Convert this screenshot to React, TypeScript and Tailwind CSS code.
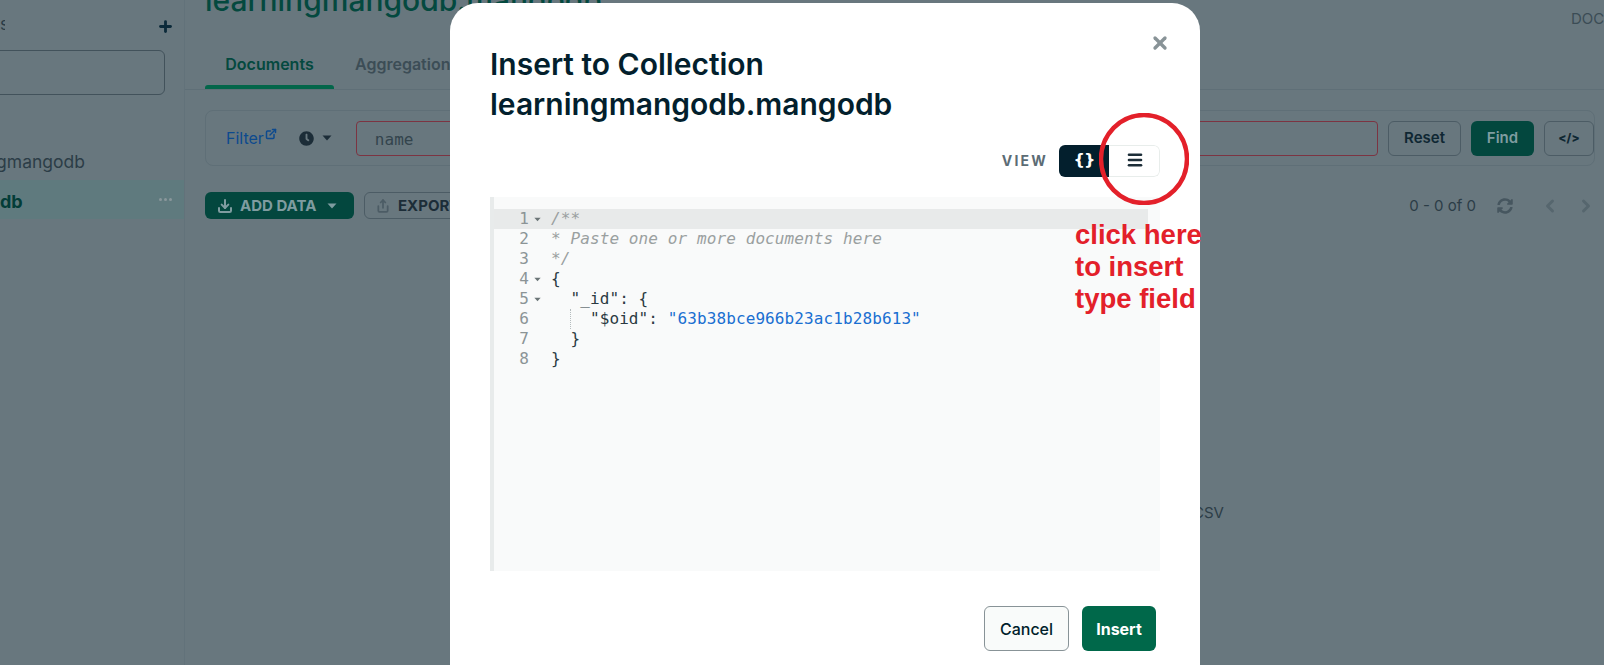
import React from "react";
import { Plus, ExternalLink, Download, Share, ChevronLeft, ChevronRight, X, Menu } from "lucide-react";
import { FaClock, FaSyncAlt } from "react-icons/fa";

function Caret({ className }: { className?: string }) {
  return (
    <svg viewBox="0 0 10 6" className={className} width="10" height="6">
      <path d="M0.5 0.5 L9.5 0.5 L5 5.5 Z" fill="currentColor" />
    </svg>
  );
}

const lines: { n: number; fold?: boolean; node: React.ReactNode; active?: boolean; guide?: boolean }[] = [
  { n: 1, fold: true, active: true, node: <span className="italic text-[#9aa0a0]">/**</span> },
  { n: 2, node: <span className="italic text-[#9aa0a0]">{"* Paste one or more documents here"}</span> },
  { n: 3, node: <span className="italic text-[#9aa0a0]">{"*/"}</span> },
  { n: 4, fold: true, node: <span>{"{"}</span> },
  { n: 5, fold: true, node: <span>{'  "_id": {'}</span> },
  {
    n: 6,
    guide: true,
    node: (
      <span>
        {'    "$oid": '}
        <span className="text-[#1a6fd1]">"63b38bce966b23ac1b28b613"</span>
      </span>
    ),
  },
  { n: 7, node: <span>{"  }"}</span> },
  { n: 8, node: <span>{"}"}</span> },
];

export default function App() {
  return (
    <div className="relative flex h-[665px] w-[1604px] overflow-hidden bg-[#68777e] font-['Inter',sans-serif] text-[#1c2d38]">
      {/* dimmed sidebar */}
      <aside className="flex w-[185px] shrink-0 flex-col border-r border-[#62727a] pt-[14px]">
        <div className="flex h-[22px] items-center justify-between pr-[10px] text-[17px] text-[#2a3b45]">
          <span className="w-[5px] overflow-hidden">s</span>
          <Plus size={17} strokeWidth={4} className="mt-[2px] text-[#0b2a3a]" />
        </div>
        <div className="-ml-[10px] mt-[14px] mr-[19px] h-[45px] rounded-[6px] border border-[#42525b]" />
        <div className="mt-[54px] flex h-[26px] items-center justify-end overflow-hidden pr-[99px] text-[17.5px] whitespace-nowrap text-[#2c3d47]">
          learningmangodb
        </div>
        <div className="mt-[5px] flex h-[39px] items-center bg-[#5f7a7e]">
          <span className="pt-[3px] text-[18px] font-bold text-[#033d38]">db</span>
          <div className="ml-auto mr-[12px] flex gap-[2px]">
            <span className="h-[3px] w-[3px] rounded-full bg-[#8a979c]" />
            <span className="h-[3px] w-[3px] rounded-full bg-[#8a979c]" />
            <span className="h-[3px] w-[3px] rounded-full bg-[#8a979c]" />
          </div>
        </div>
      </aside>

      {/* dimmed main */}
      <main className="flex min-w-0 flex-1 flex-col">
        <div className="flex h-[39px] justify-between pl-[20px]">
          <div className="-mt-[19px] text-[30px] leading-[38px] font-medium whitespace-nowrap text-[#04493f]">
            learningmangodb.mangodb
          </div>
          <div className="mt-[11px] w-[33px] text-[15px] leading-[16px] whitespace-nowrap text-[#3b4c55]">DOC</div>
        </div>
        <div className="flex h-[51px] items-end gap-[41px] border-b border-[#5f6f77] pl-[20px]">
          <div className="relative flex h-[50px] w-[129px] justify-center pt-[13px] text-[16px] font-semibold text-[#04493f]">
            Documents
            <span className="absolute inset-x-0 bottom-0 h-[4px] rounded-t-[3px] bg-[#03664a]" />
          </div>
          <div className="-ml-[20px] h-[50px] pt-[13px] text-[16px] font-semibold text-[#3c4d56]">Aggregations</div>
        </div>
        <div className="mt-[20px] mr-[9px] ml-[20px] flex h-[56px] items-center rounded-[8px] border border-[#5f6f77] pl-[20px]">
          <span className="text-[16px] text-[#0d4a8e]">Filter</span>
          <ExternalLink size={12} strokeWidth={3} className="mb-[8px] ml-[1px] text-[#0d4a8e]" />
          <FaClock size={15} className="ml-[22px] text-[#1c2d38]" />
          <Caret className="ml-[8px] text-[#1c2d38]" />
          <div className="ml-[24px] flex h-[35px] min-w-0 flex-1 items-center rounded-[4px] border border-[#7c3442] pt-[3px] pl-[18px] font-['DejaVu_Sans_Mono',monospace] text-[16px] text-[#33444d]">
            name
          </div>
          <button className="ml-[10px] h-[35px] w-[73px] rounded-[6px] border border-[#4c5c65] pt-[1px] text-[15px] font-semibold text-[#0f2733]">Reset</button>
          <button className="ml-[10px] h-[35px] w-[63px] rounded-[6px] bg-[#03473e] pt-[1px] text-[15px] font-semibold text-[#7f9ca0]">Find</button>
          <button className="ml-[10px] flex h-[35px] w-[50px] items-center justify-center rounded-[6px] border border-[#4c5c65] text-[12px] font-extrabold text-[#0f2733]">
            &lt;/&gt;
          </button>
        </div>
        <div className="mt-[26px] flex h-[27px] items-center pr-[8px] pl-[20px]">
          <div className="flex h-[27px] w-[149px] items-center rounded-[6px] bg-[#03473e] pt-[1px] pl-[12px] text-[15px] font-bold text-[#7f9ca0]">
            <Download size={16} strokeWidth={3} />
            <span className="ml-[7px]">ADD DATA</span>
            <Caret className="ml-[11px]" />
          </div>
          <div className="ml-[10px] flex h-[27px] w-[140px] items-center rounded-[6px] border border-[#4c5c65] pt-[1px] pl-[11px] text-[15px] font-bold text-[#1c2d38]">
            <Share size={14} strokeWidth={3} className="text-[#4c5c65]" />
            <span className="ml-[8px]">EXPORT DATA</span>
          </div>
          <div className="ml-auto flex items-center pt-[1px] text-[15px] text-[#2c3d47]">
            0 - 0 of 0
            <FaSyncAlt size={16} className="ml-[21px] text-[#46565f]" />
            <ChevronLeft size={20} strokeWidth={3.5} className="ml-[27px] text-[#56666e]" />
            <ChevronRight size={20} strokeWidth={3.5} className="ml-[16px] text-[#56666e]" />
          </div>
        </div>
        <div className="mt-[283px] pl-[1008px] text-[15px] text-[#2c3d47]">CSV</div>
      </main>

      {/* modal */}
      <div className="absolute top-[3px] left-[450px] flex h-[700px] w-[750px] flex-col rounded-[28px] bg-white px-[40px] pt-[41px]">
        <button className="absolute top-[30px] right-[30px] text-[#889397]">
          <X size={20} strokeWidth={4} />
        </button>
        <h1 className="text-[30px] leading-[40px] font-semibold text-[#031f2d]">
          Insert to Collection
          <br />
          learningmangodb.mangodb
        </h1>
        <div className="mt-[21px] flex h-[32px] items-center justify-end">
          <span className="mr-[11px] -mt-[2px] text-[14px] font-bold tracking-[2.2px] text-[#5c6c75]">VIEW</span>
          <div className="flex h-[32px] w-[101px] overflow-hidden rounded-[6px]">
            <div className="flex w-[50px] items-center justify-center bg-[#031f2d] pb-[2px] font-['DejaVu_Sans',sans-serif] text-[16px] font-bold tracking-[-1px] text-white">
              {"{}"}
            </div>
            <div className="flex flex-1 items-center justify-center rounded-r-[6px] border border-l-0 border-[#e8edeb] bg-white pb-[2px] pl-[1px] text-[#1c2d38]">
              <Menu size={18} strokeWidth={3.5} />
            </div>
          </div>
        </div>
        <div className="mt-[20px] h-[374px] border-l-[4px] border-[#e8ebeb] bg-[#f9fafa] pt-[12px] font-['DejaVu_Sans_Mono',monospace] text-[16px] leading-[20px] tracking-[0.1px] text-[#2b3a42]">
          {lines.map((l) => (
            <div key={l.n} className={`relative flex h-[20px] whitespace-pre ${l.active ? "mr-[12px] bg-[#e8eaea]" : ""}`}>
              <span className="w-[35px] shrink-0 text-right text-[#8b9496]">{l.n}</span>
              <span className="flex w-[22px] shrink-0 items-center pl-[5px] text-[#6b7577]">
                {l.fold ? <Caret className="h-[5px] w-[7px]" /> : null}
              </span>
              {l.guide ? <span className="absolute top-0 bottom-0 left-[76px] border-l border-dotted border-[#b5bcbe]" /> : null}
              {l.node}
            </div>
          ))}
        </div>
        <div className="mt-[35px] flex justify-end gap-[13px] pr-[4px]">
          <button className="h-[45px] w-[85px] rounded-[6px] border border-[#889397] bg-[#f9fbfa] text-[16px] font-medium text-[#001e2b]">Cancel</button>
          <button className="h-[45px] w-[74px] rounded-[6px] bg-[#00684a] text-[16px] font-bold text-white">Insert</button>
        </div>
      </div>

      {/* red annotation */}
      <svg className="absolute top-[113px] left-[1099px]" width="90" height="92" viewBox="0 0 90 92">
        <ellipse cx="45" cy="46" rx="43" ry="44" fill="none" stroke="#e3202a" strokeWidth="4.5" />
      </svg>
      <div className="absolute top-[219px] left-[1075px] font-['Liberation_Sans',sans-serif] text-[27.5px] leading-[32px] font-bold whitespace-nowrap text-[#e3202a]">
        click here
        <br />
        to insert
        <br />
        type field
      </div>
    </div>
  );
}
